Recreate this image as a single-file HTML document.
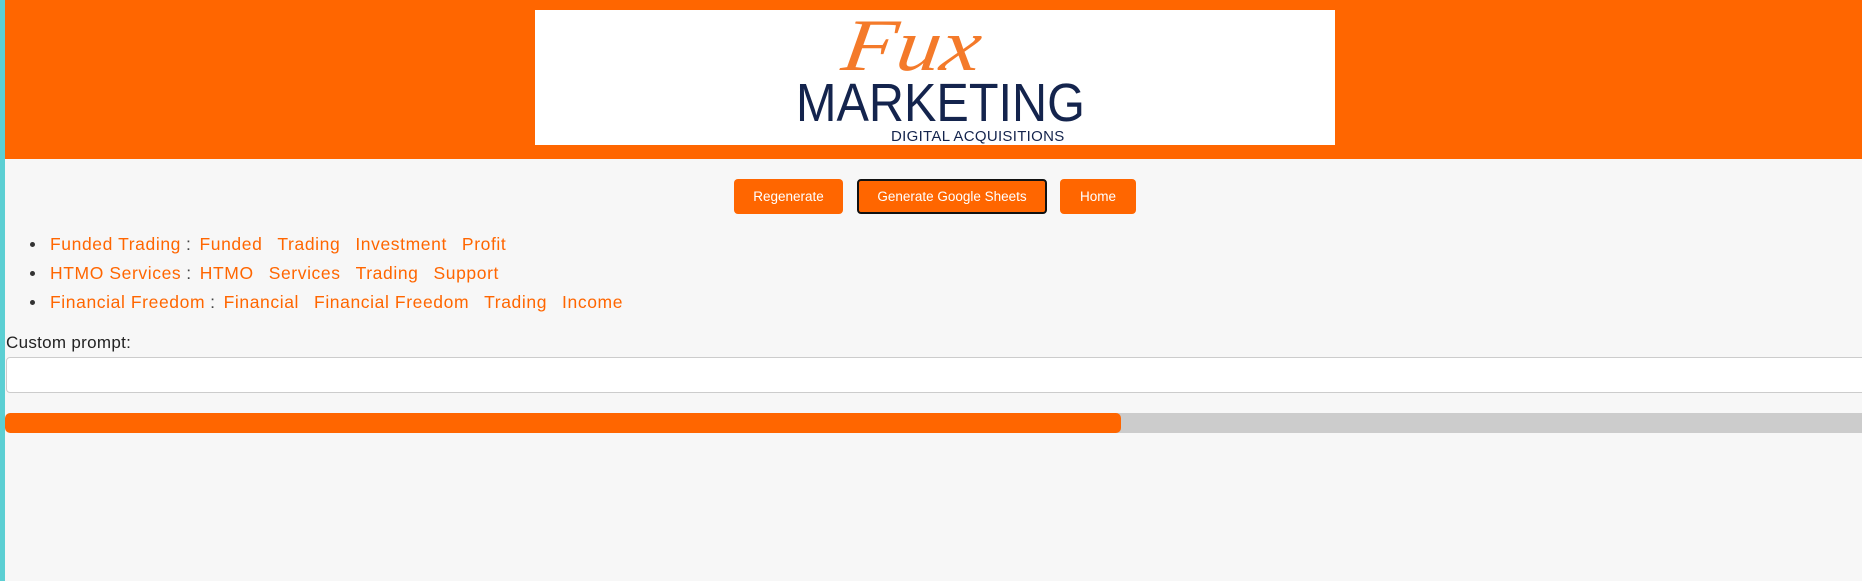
<!DOCTYPE html>
<html><head><style>
*{box-sizing:border-box;margin:0;padding:0}
body{width:1862px;height:581px;background:#f7f7f7;font-family:"Liberation Sans",Arial,sans-serif;position:relative;overflow:hidden}
.teal{position:absolute;left:0;top:0;width:5px;height:581px;background:#5ccfd3}
.hdr{position:absolute;left:5px;top:0;width:1857px;height:159px;background:#ff6600}
.logo{position:absolute;left:535px;top:10px;width:800px;height:135px;background:#fff;overflow:hidden}
.fux{position:absolute;left:308px;top:-6px;font-family:"Liberation Serif",serif;font-style:italic;font-size:74px;color:#f47a2a;transform:skewX(-8deg) scaleX(1.2);transform-origin:left}
.mk{position:absolute;left:261px;top:62px;font-size:54px;color:#14244d;letter-spacing:0px;transform:scaleX(0.9);transform-origin:left}
.dg{position:absolute;left:356px;top:118px;font-size:15px;color:#14244d;letter-spacing:0.3px}
.btn{position:absolute;top:179px;height:35px;background:#ff6600;color:#fff;font-size:13.5px;border-radius:4px;display:flex;align-items:center;justify-content:center}
ul{position:absolute;left:31px;top:232px;list-style:none}
li{height:29px;font-size:17.5px;letter-spacing:0.6px;color:#ff6600;position:relative;padding-left:19px;line-height:24px;white-space:nowrap}
li:before{content:"";position:absolute;left:-1px;top:10px;width:5px;height:5px;border-radius:50%;background:#333}
li span{margin-right:15px}
li .c{color:#444;margin-right:8px;margin-left:-10px}
.lbl{position:absolute;left:6px;top:333px;font-size:17px;letter-spacing:0.3px;color:#222}
.inp{position:absolute;left:6px;top:357px;width:1870px;height:36px;background:#fff;border:1px solid #ccc;border-radius:4px}
.bar{position:absolute;left:5px;top:413px;width:1857px;height:20px;background:#ccc;border-radius:5px 0 0 5px;overflow:hidden}
.bar div{width:1116px;height:100%;background:#ff6600;border-radius:5px}
</style></head><body>
<div class="teal"></div>
<div class="hdr"></div>
<div class="logo">
<div class="fux">Fux</div>
<div class="mk">MARKETING</div>
<div class="dg">DIGITAL ACQUISITIONS</div>
</div>
<div class="btn" style="left:734px;width:109px">Regenerate</div>
<div class="btn" style="left:857px;width:190px;border:2px solid #111">Generate Google Sheets</div>
<div class="btn" style="left:1060px;width:76px">Home</div>
<ul>
<li><span>Funded Trading</span><span class="c">:</span><span>Funded</span><span>Trading</span><span>Investment</span><span>Profit</span></li>
<li><span>HTMO Services</span><span class="c">:</span><span>HTMO</span><span>Services</span><span>Trading</span><span>Support</span></li>
<li><span>Financial Freedom</span><span class="c">:</span><span>Financial</span><span>Financial Freedom</span><span>Trading</span><span>Income</span></li>
</ul>
<div class="lbl">Custom prompt:</div>
<div class="inp"></div>
<div class="bar"><div></div></div>
</body></html>
